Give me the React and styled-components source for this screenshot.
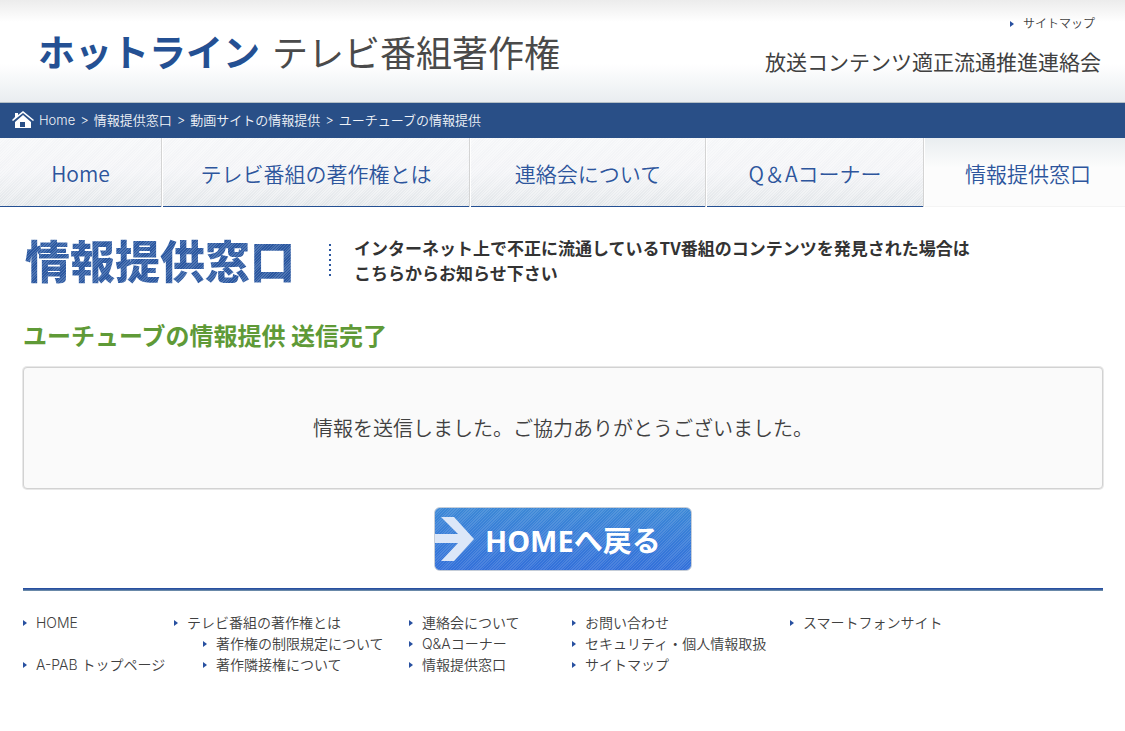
import React from 'react';
import styled, { createGlobalStyle, css } from 'styled-components';

const GlobalStyle = createGlobalStyle`
  * {
    box-sizing: border-box;
  }

  body {
    margin: 0;
    background: #fff;
    color: #404040;
    font-family: Inter, 'Noto Sans CJK JP', sans-serif;
    font-size: 14px;
    line-height: 20px;
  }

  h1, h2, p, ul {
    margin: 0;
    padding: 0;
  }

  ul {
    list-style: none;
  }

  a {
    color: inherit;
    text-decoration: none;
  }
`;

const jpFont = css`
  font-family: 'Noto Sans CJK JP', sans-serif;
`;

const Header = styled.header`
  display: flex;
  justify-content: space-between;
  height: 103px;
  padding: 14px 24px 0 38px;
  border-bottom: 1px solid #b4bfc6;
  background: linear-gradient(#ececec 0, #fff 22px, #fff 64px, #e9edf0 100%);
`;

const Logo = styled.a`
  ${jpFont}
  display: flex;
  gap: 12px;
  margin-top: 13px;
  font-size: 36px;
  line-height: 48px;
  font-weight: 400;
  color: #4a4a4a;
  white-space: nowrap;

  strong {
    font-size: 37px;
    font-weight: 700;
    color: #245093;
  }
`;

const HeaderSide = styled.div`
  display: flex;
  flex-direction: column;
  align-items: flex-end;
  gap: 12px;
  white-space: nowrap;
`;

const Association = styled.p`
  ${jpFont}
  font-size: 21px;
  line-height: 30px;
  font-weight: 400;
`;

const ArrowLink = styled.a`
  display: flex;
  align-items: center;
  gap: 9px;
  padding-right: ${props => (props.$small ? '6px' : '0')};
  font-size: ${props => (props.$small ? '12px' : '14px')};
  font-weight: 350;

  &:before {
    content: '';
    border: solid transparent;
    border-width: 3px 0 3px 4px;
    border-left-color: #2850a0;
  }
`;

const Breadcrumb = styled.nav`
  display: flex;
  align-items: center;
  gap: 5px;
  height: 35px;
  padding: 0 12px 2px;
  background: #294f87;
  color: #f0f3f8;
  font-size: 13px;
  font-weight: 350;
`;

const Nav = styled.nav`
  display: grid;
  grid-template-columns: 161fr 306fr 234fr 216fr 200fr;
  gap: 2px;
  height: 70px;
`;

const NavItem = styled.a`
  ${jpFont}
  display: flex;
  align-items: center;
  justify-content: center;
  height: 69px;
  padding-top: 2px;
  padding-left: ${props => (props.$active ? '6px' : '0')};
  font-size: 21px;
  font-weight: 350;
  color: #2d559c;
  white-space: nowrap;

  ${props => props.$active
    ? css`
        background: linear-gradient(#e9edf0, #fcfcfc 30px);
        border-bottom: 1px solid #f4f4f4;
      `
    : css`
        background:
          repeating-linear-gradient(135deg, rgba(255, 255, 255, 0.4) 0 1px, transparent 1px 2px),
          linear-gradient(#f5f6f8, #f2f3f6 50%, #e2e6e9);
        border-bottom: 1px solid #245093;
        box-shadow: 1px 0 #d4d4d4;
      `}
`;

const Main = styled.main`
  padding: 0 22px 0 23px;
`;

const TitleRow = styled.div`
  display: flex;
  align-items: center;
  gap: 34px;
  padding: 22px 2px 0;
`;

const Title = styled.h1`
  ${jpFont}
  font-size: 45px;
  line-height: 60px;
  font-weight: 900;
  white-space: nowrap;
  color: transparent;
  background: repeating-linear-gradient(135deg, #4f76b3 0 1px, #2b579f 1px 2px);
  background-clip: text;
`;

const Lead = styled.p`
  ${jpFont}
  display: flex;
  align-items: center;
  gap: 23px;
  font-size: 17px;
  line-height: 25px;
  font-weight: 700;
  color: #333;

  &:before {
    content: '';
    height: 32px;
    width: 2px;
    background: repeating-linear-gradient(#2b579f 0 2px, transparent 2px 5px);
  }
`;

const Subtitle = styled.h2`
  ${jpFont}
  margin-top: 27px;
  font-size: 24px;
  line-height: 36px;
  font-weight: 700;
  color: #5f9a37;
`;

const Message = styled.p`
  ${jpFont}
  display: flex;
  align-items: center;
  justify-content: center;
  height: 122px;
  margin-top: 14px;
  border: 1px solid #d2d2d2;
  border-radius: 4px;
  box-shadow: 0 0 0 1px #e8e8e8;
  background: #fafafa;
  font-size: 20px;
  font-weight: 350;
`;

const HomeButton = styled.button`
  display: flex;
  align-items: center;
  gap: 11px;
  width: 258px;
  height: 64px;
  margin: 18px auto 17px;
  padding: 0;
  border: 1px solid #c5cdd8;
  border-radius: 6px;
  background:
    repeating-linear-gradient(135deg, rgba(255, 255, 255, 0.12) 0 1px, transparent 1px 2px),
    linear-gradient(#3c88d6, #3370da);
  font-family: 'Noto Sans', 'Noto Sans CJK JP', sans-serif;
  font-size: 29px;
  font-weight: 700;
  color: #fff;
  white-space: nowrap;
`;

const Footer = styled.footer`
  display: grid;
  grid-template-columns: 151px 235px 163px 218px 1fr;
  margin: 0 22px 0 23px;
  padding-top: 25px;
  background: linear-gradient(#2850a0 1px, #7f9cab 3px) top / 100% 3px no-repeat;
`;

const LinkList = styled.ul`
  display: flex;
  flex-direction: column;
  white-space: nowrap;

  li {
    height: 21px;
    padding-left: ${props => (props.$nested ? '29px' : '0')};
  }
`;

const breadcrumbs = ['情報提供窓口', '動画サイトの情報提供', 'ユーチューブの情報提供'];

const navItems = ['Home', 'テレビ番組の著作権とは', '連絡会について', 'Q＆Aコーナー', '情報提供窓口'];

const footerColumns = [
  ['HOME', '', 'A-PAB トップページ'],
  ['テレビ番組の著作権とは', { nested: ['著作権の制限規定について', '著作隣接権について'] }],
  ['連絡会について', 'Q&Aコーナー', '情報提供窓口'],
  ['お問い合わせ', 'セキュリティ・個人情報取扱', 'サイトマップ'],
  ['スマートフォンサイト'],
];

const HouseIcon = () => (
  <svg width="22" height="18" viewBox="0 0 22 18" fill="#fff" aria-hidden="true">
    <path d="M3 2h3v2l5-4 11 9-1 1L11 2 1 10 0 9l3-3Z" />
    <path d="M11 4 19 11v6H3v-6Z M8 11v5h5v-5Z" fillRule="evenodd" />
  </svg>
);

const ArrowIcon = () => (
  <svg width="39" height="44" viewBox="0 0 39 44" fill="#dce7f8" aria-hidden="true">
    <path d="M6 0h13l20 22-20 22H6l17-18H0v-9h23Z" />
  </svg>
);

const FooterLinks = ({ items, nested }) => {
  const rows = items.map((item, i) => (
    item.nested
      ? <li key={i}><FooterLinks items={item.nested} nested /></li>
      : <li key={i}>{item && <ArrowLink href="#">{item}</ArrowLink>}</li>
  ));

  return <LinkList $nested={nested}>{rows}</LinkList>;
};

const App = () => (
  <>
    <GlobalStyle />
    <Header>
      <Logo href="#"><strong>ホットライン</strong>テレビ番組著作権</Logo>
      <HeaderSide>
        <ArrowLink href="#" $small>サイトマップ</ArrowLink>
        <Association>放送コンテンツ適正流通推進連絡会</Association>
      </HeaderSide>
    </Header>
    <Breadcrumb>
      <HouseIcon />
      <a href="#">Home</a>
      {breadcrumbs.map(label => (
        <React.Fragment key={label}>
          <span>&gt;</span>
          <a href="#">{label}</a>
        </React.Fragment>
      ))}
    </Breadcrumb>
    <Nav>
      {navItems.map((label, i) => (
        <NavItem key={label} href="#" $active={i === navItems.length - 1}>{label}</NavItem>
      ))}
    </Nav>
    <Main>
      <TitleRow>
        <Title>情報提供窓口</Title>
        <Lead>
          <span>
            インターネット上で不正に流通しているTV番組のコンテンツを発見された場合は
            <br />
            こちらからお知らせ下さい
          </span>
        </Lead>
      </TitleRow>
      <Subtitle>ユーチューブの情報提供 送信完了</Subtitle>
      <Message>情報を送信しました。ご協力ありがとうございました。</Message>
      <HomeButton type="button">
        <ArrowIcon />
        HOMEへ戻る
      </HomeButton>
    </Main>
    <Footer>
      {footerColumns.map((items, i) => <FooterLinks key={i} items={items} />)}
    </Footer>
  </>
);

export default App;
